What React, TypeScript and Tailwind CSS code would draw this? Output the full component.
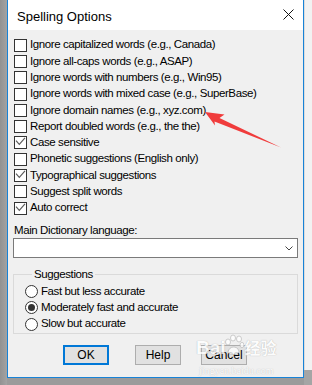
import React from 'react';

const options: { label: string; checked?: boolean }[] = [
  { label: 'Ignore capitalized words (e.g., Canada)' },
  { label: 'Ignore all-caps words (e.g., ASAP)' },
  { label: 'Ignore words with numbers (e.g., Win95)' },
  { label: 'Ignore words with mixed case (e.g., SuperBase)' },
  { label: 'Ignore domain names (e.g., xyz.com)' },
  { label: 'Report doubled words (e.g., the the)' },
  { label: 'Case sensitive', checked: true },
  { label: 'Phonetic suggestions (English only)' },
  { label: 'Typographical suggestions', checked: true },
  { label: 'Suggest split words' },
  { label: 'Auto correct', checked: true },
];

const speeds = ['Fast but less accurate', 'Moderately fast and accurate', 'Slow but accurate'];

const CheckBox: React.FC<{ checked?: boolean }> = ({ checked }) => (
  <span className="w-[13px] h-[13px] border border-[#333333] bg-white shrink-0 flex">
    {checked && (
      <svg width="11" height="11" viewBox="0 0 11 11">
        <path d="M1 3.6 L4.3 7.4 L10 0.9" stroke="#5c5c5c" strokeWidth="1.2" fill="none" />
      </svg>
    )}
  </span>
);

const Radio: React.FC<{ on?: boolean }> = ({ on }) => (
  <span className="w-[13px] h-[13px] rounded-full border border-[#333333] bg-white shrink-0 flex items-center justify-center">
    {on && <span className="w-[7px] h-[7px] rounded-full bg-[#333333]" />}
  </span>
);

export default function App() {
  return (
    <div className="relative w-[312px] h-[385px] overflow-hidden bg-[#9b9b9b] flex font-['Liberation_Sans',Arial,sans-serif] text-black">
      <div className="w-[7px] shrink-0 bg-gradient-to-r from-[#929292] to-[#a3a3a3]" />

      {/* dialog window */}
      <div className="w-[297px] h-[378px] shrink-0 flex flex-col border-x border-b border-[#1883d7] bg-[#f0f0f0]">
        <div className="h-[30px] bg-white flex items-center justify-between pl-[9px] pr-[9px]">
          <span className="text-[13px] leading-none mt-[2px]">Spelling Options</span>
          <svg width="11" height="11" viewBox="0 0 11 11" className="mb-[1px]">
            <path d="M0.5 0.5 L10.5 10.5 M10.5 0.5 L0.5 10.5" stroke="#111" strokeWidth="1" />
          </svg>
        </div>

        <div className="flex flex-col px-[5px] pt-[7px] text-[11.5px] tracking-[-0.4px]">
          {options.map((o) => (
            <div key={o.label} className="h-[16.3px] flex items-center pl-[1px]">
              <CheckBox checked={o.checked} />
              <span className="ml-[3px] leading-none whitespace-nowrap">{o.label}</span>
            </div>
          ))}

          <div className="mt-[7px] h-[14px] leading-[14px] pl-[1px]">Main Dictionary language:</div>
          <div className="mt-[1px] h-[20px] w-[285px] border border-[#7a7a7a] bg-white flex items-center justify-end pr-[4px]">
            <svg width="8" height="5" viewBox="0 0 8 5">
              <path d="M0.5 0.5 L4 4 L7.5 0.5" stroke="#444" strokeWidth="1" fill="none" />
            </svg>
          </div>

          <fieldset className="mt-[9px] w-[285px] h-[67px] border border-[#dadada] pl-[11px] pt-[2px]">
            <legend className="ml-[7px] px-[2px] h-[14px] leading-[14px]">Suggestions</legend>
            {speeds.map((s, i) => (
              <div key={s} className="h-[16.4px] flex items-center">
                <Radio on={i === 1} />
                <span className="ml-[3px] leading-none whitespace-nowrap">{s}</span>
              </div>
            ))}
          </fieldset>

          <div className="mt-[11px] flex text-[12px] tracking-normal">
            <button className="ml-[50px] w-[46px] h-[20px] border-2 border-[#0078d7] bg-[#e1e1e1] flex items-center justify-center">
              OK
            </button>
            <button className="ml-[26px] w-[46px] h-[20px] border border-[#adadad] bg-[#e1e1e1] flex items-center justify-center">
              Help
            </button>
            <button className="ml-[20px] w-[46px] h-[20px] border border-[#adadad] bg-[#e1e1e1] flex items-center justify-center">
              Cancel
            </button>
          </div>
        </div>
      </div>

      <div className="flex-1 flex flex-col">
        <div className="h-[370px] bg-[#f2f2f2] border-l border-[#dcdcdc]" />
        <div className="flex-1 bg-[#a5a5a5]" />
      </div>

      {/* red annotation arrow */}
      <svg className="absolute inset-0 pointer-events-none" width="312" height="385" viewBox="0 0 312 385">
        <polygon points="205,112 224.5,114.5 219.5,118 281,147.5 214.5,121.5 215,125.5" fill="#f03c3c" />
      </svg>

      {/* watermark */}
      <div className="absolute left-[196px] top-[334px] pointer-events-none flex flex-col items-center opacity-80">
        <div className="flex items-center text-white [text-shadow:0_0_1px_#9a9a9a]">
          <span className="text-[19px] font-bold leading-none font-['Liberation_Sans',Arial,sans-serif]">Bai</span>
          <svg width="20" height="22" viewBox="0 0 20 22" className="-ml-[2px] mb-[4px]">
            <g fill="#ffffff" stroke="#b5b5b5" strokeWidth="0.8">
              <ellipse cx="4" cy="8" rx="2.5" ry="3" />
              <ellipse cx="9" cy="4" rx="2.5" ry="3" />
              <ellipse cx="15" cy="5" rx="2.5" ry="3" />
              <ellipse cx="18" cy="11" rx="2" ry="2.6" />
              <path d="M4 18 C5 12 13 11 15 17 C16 21 5 22 4 18 Z" />
            </g>
          </svg>
          <span className="text-[16px] font-bold leading-none ml-[1px] font-['Noto_Sans_CJK_SC',sans-serif]">经验</span>
        </div>
        <span className="text-[10px] leading-none mt-[6px] text-white [text-shadow:0_0_1px_#a8a8a8] font-['Liberation_Serif',serif]">
          jingyan.baidu.com
        </span>
      </div>
    </div>
  );
}
